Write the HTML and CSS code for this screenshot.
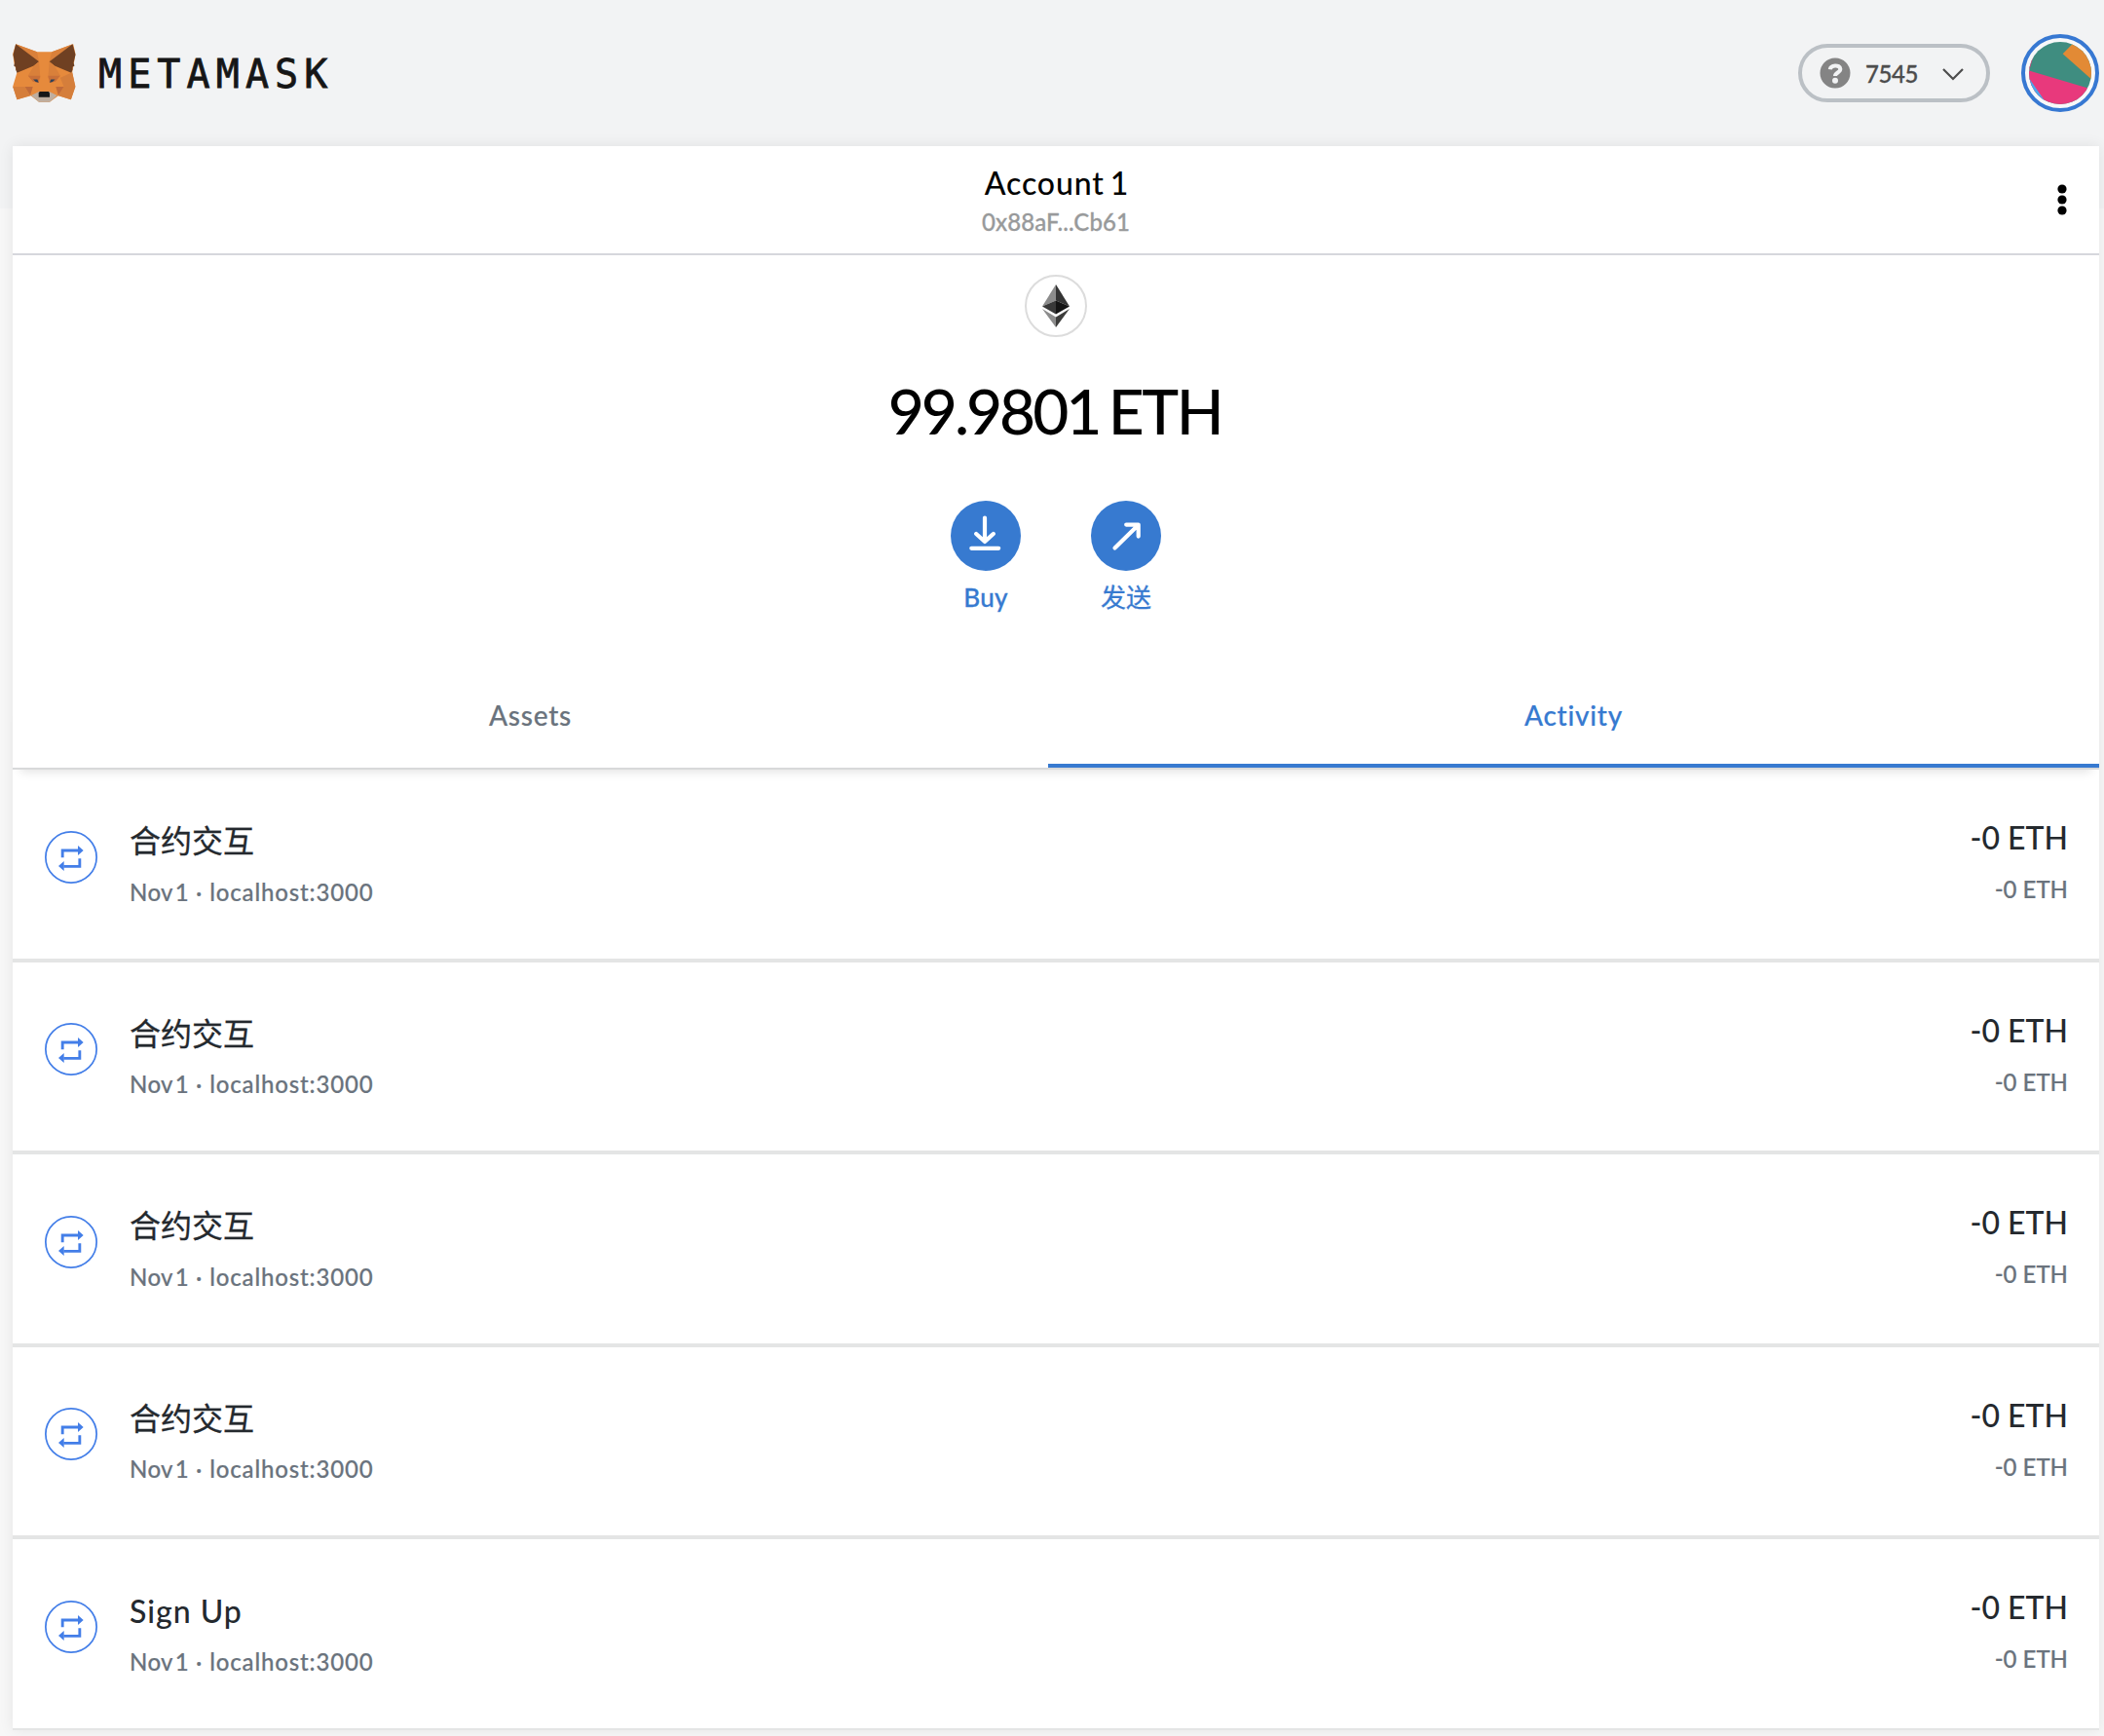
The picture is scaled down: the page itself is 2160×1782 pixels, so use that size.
FILE: index.html
```
<!DOCTYPE html>
<html lang="zh-CN">
<head>
<meta charset="utf-8">
<title>MetaMask</title>
<link rel="stylesheet" href="styles.css">
</head>
<body>
<svg class="defs" width="0" height="0">
  <symbol id="swap" viewBox="138 489 162 162">
    <circle cx="219" cy="570" r="78.4" fill="none" stroke="#437ee8" stroke-width="5.200"/>
    <path d="M192.5 571V549H242M245.500 574V598H196" fill="none" stroke="#437ee8" stroke-width="8.600"/>
    <path d="M240 534l17 15-17 15zM197 582l-17 15 17 15z" fill="#437ee8"/>
  </symbol>
</svg>
<header class="topbar">
  <div class="brand">
    <svg class="fox" viewBox="39 44 195 181">
      <path d="M48 45l66 24h46l66-24 7 30-5 30-5 27 9 44-13 41-39-12-27 19h-33l-25-19-43 12-13-41 13-44-9-27-4-30z" fill="#e68a3c"/>
      <path d="M48 45l66 24 6 30zM224 45l-64 24-8 30z" fill="#d9803a"/>
      <path d="M48 45l72 54-16 13-52 22-4-10v-8l-6-4 3-9-5-25zM224 45l-72 54 16 13 52 22 4-10v-8l6-4-3-9 6-25z" fill="#6f4022"/>
      <path d="M120 99L104 112 86 143l38 7zM152 99l16 13 18 31-38 7z" fill="#d9803a"/>
      <path d="M39 177h36l18 27-41 13zM233 177h-36l-18 27 40 13z" fill="#d57e3b"/>
      <path d="M223 132l10 45h-36l-11-28z" fill="#d57e3b"/>
      <path d="M76 177h25l-8 26zM197 177h-25l8 26z" fill="#c06a39"/>
      <path d="M86 143h38l-5 22-18-4zM186 143h-38l5 22 18-4z" fill="#c97038"/>
      <path d="M102 154h13l4 10-9-2zM170 154h-13l-4 10 9-2z" fill="#2f4156"/>
      <path d="M96 204l24-12h32l24 12-23 20h-33z" fill="#bfae9f"/>
      <path d="M122 192h28l3 4v13h-34v-13z" fill="#171717"/>
    </svg>
    <span class="wordmark">METAMASK</span>
  </div>
  <div class="tools">
    <div class="network">
      <svg class="help" viewBox="0 0 32 32"><circle cx="16" cy="16" r="15.500" fill="#848484"/><path d="M10.800 12.300C11.300 7.600 20.800 6.800 21.300 11.800c.3 3.600-5.300 3.700-5.300 7.200" fill="none" stroke="#f2f3f4" stroke-width="4"/><circle cx="16" cy="23.800" r="3" fill="#f2f3f4"/></svg>
      <span class="network-name">7545</span>
      <svg class="chevron" viewBox="0 0 22 13"><path d="M1 1l10 10L21 1" fill="none" stroke="#4d4d4d" stroke-width="2.200"/></svg>
    </div>
    <svg class="avatar" viewBox="765 45 240 240">
      <clipPath id="disc"><circle cx="885" cy="165" r="96"/></clipPath>
      <circle cx="885" cy="165" r="114" fill="#f7f8f9" stroke="#3778d2" stroke-width="12"/>
      <g clip-path="url(#disc)">
        <path d="M780 60h210v210H780z" fill="#3f8d80"/>
        <path d="M780 155l210 62.500V270H780zM780 160l10-4 16-56-26 10z" fill="#e8397c"/>
        <path d="M930 68l-37 38 95 84V68z" fill="#e28a35"/>
        <path d="M780 168l60 86h-60z" fill="#4aa8ee"/>
      </g>
    </svg>
  </div>
</header>
<main class="wallet">
  <section class="account">
    <div class="account-name">Account 1</div>
    <div class="account-address">0x88aF...Cb61</div>
    <svg class="menu" viewBox="0 0 10 32"><circle cx="5" cy="5" r="4.600"/><circle cx="5" cy="16" r="4.600"/><circle cx="5" cy="27" r="4.600"/></svg>
  </section>
  <section class="overview">
    <div class="token">
      <svg class="diamond" viewBox="0 0 28 44"><path d="M14 0v16.500L0 22.500z" fill="#8c8c8c"/><path d="M14 0v16.500l14 6z" fill="#343434"/><path d="M0 22.500l14-6V30.500z" fill="#393939"/><path d="M28 22.500l-14-6V30.500z" fill="#141414"/><path d="M0 25l14 8.500V44z" fill="#8c8c8c"/><path d="M28 25l-14 8.500V44z" fill="#3c3c3b"/></svg>
    </div>
    <div class="balance">99.9801 <span class="unit">ETH</span></div>
    <div class="actions">
      <div class="action">
        <svg class="action-icon" viewBox="0 0 72 72"><circle cx="36" cy="36" r="36" fill="#377ad0"/><path d="M35 17.500V40M26.200 34l8.800 8 8.800-8M21.300 48.800h27.900" fill="none" stroke="#fff" stroke-width="4.200" stroke-linecap="round" stroke-linejoin="round"/></svg>
        <span class="action-label buy">Buy</span>
      </div>
      <div class="action">
        <svg class="action-icon" viewBox="0 0 72 72"><circle cx="36" cy="36" r="36" fill="#377ad0"/><path d="M24.500 48.500l24-23.500M36.200 24.600h12.500v12" fill="none" stroke="#fff" stroke-width="4.200" stroke-linecap="round" stroke-linejoin="round"/></svg>
        <span class="action-label">发送</span>
      </div>
    </div>
  </section>
  <nav class="tabs">
    <div class="tab">Assets</div>
    <div class="tab active">Activity</div>
  </nav>
  <section class="list">
    <article class="row">
      <svg class="row-icon"><use href="#swap"/></svg>
      <div class="info"><div class="title">合约交互</div><div class="meta"><span class="date">Nov 1</span> · localhost:3000</div></div>
      <div class="amount"><div class="primary">-0 ETH</div><div class="secondary">-0 ETH</div></div>
    </article>
    <article class="row">
      <svg class="row-icon"><use href="#swap"/></svg>
      <div class="info"><div class="title">合约交互</div><div class="meta"><span class="date">Nov 1</span> · localhost:3000</div></div>
      <div class="amount"><div class="primary">-0 ETH</div><div class="secondary">-0 ETH</div></div>
    </article>
    <article class="row">
      <svg class="row-icon"><use href="#swap"/></svg>
      <div class="info"><div class="title">合约交互</div><div class="meta"><span class="date">Nov 1</span> · localhost:3000</div></div>
      <div class="amount"><div class="primary">-0 ETH</div><div class="secondary">-0 ETH</div></div>
    </article>
    <article class="row">
      <svg class="row-icon"><use href="#swap"/></svg>
      <div class="info"><div class="title">合约交互</div><div class="meta"><span class="date">Nov 1</span> · localhost:3000</div></div>
      <div class="amount"><div class="primary">-0 ETH</div><div class="secondary">-0 ETH</div></div>
    </article>
    <article class="row">
      <svg class="row-icon"><use href="#swap"/></svg>
      <div class="info"><div class="title latin">Sign Up</div><div class="meta"><span class="date">Nov 1</span> · localhost:3000</div></div>
      <div class="amount"><div class="primary">-0 ETH</div><div class="secondary">-0 ETH</div></div>
    </article>
  </section>
</main>
</body>
</html>
```
FILE: styles.css
```
* { box-sizing: border-box; }
body {
  margin: 0;
  height: 1782px;
  overflow: hidden;
  padding: 0 5px 0 13px;
  background: linear-gradient(#f2f3f4 214px, #f7f7f7 214px);
  font-family: Lato, "Noto Sans CJK SC", sans-serif;
  font-weight: 500;
  color: #24292e;
  white-space: nowrap;
}
svg { display: block; flex: none; }
.defs { position: absolute; }

.topbar { height: 150px; display: flex; justify-content: space-between; align-items: center; }
.brand { display: flex; align-items: center; gap: 23px; }
.fox { width: 65px; height: 60px; }
.wordmark {
  padding-top: 2px;
  font: 40px/60px "DejaVu Sans Mono", monospace;
  letter-spacing: 6.1px;
  color: #161616;
  -webkit-text-stroke: .8px #161616;
}
.tools { display: flex; align-items: center; gap: 32px; }
.network {
  width: 197px;
  height: 60px;
  border: 4px solid #bbc0c5;
  border-radius: 30px;
  display: flex;
  align-items: center;
  padding-left: 18px;
}
.help { width: 32px; height: 32px; }
.network-name { width: 79px; margin-left: 15px; font-size: 24px; letter-spacing: -.4px; color: #4d4d4d; -webkit-text-stroke: .3px; }
.chevron { width: 22px; height: 13px; margin-top: 2px; }
.avatar { width: 80px; height: 80px; }

.wallet { height: 1626px; background: #fff; box-shadow: 0 0 14px rgba(0, 0, 0, .08); display: flex; flex-direction: column; }
.account {
  position: relative;
  height: 112px;
  padding-top: 18px;
  border-bottom: 2px solid #d6d7dc;
  text-align: center;
}
.account-name { padding-left: 2px; font-size: 32px; line-height: 40px; letter-spacing: .9px; word-spacing: -3px; color: #000; }
.account-address { margin-top: 5px; font-size: 24px; line-height: 30px; letter-spacing: .1px; color: #989a9b; -webkit-text-stroke: .3px; }
.menu { position: absolute; right: 33px; top: 39px; width: 10px; height: 32px; }

.overview { height: 453px; padding-top: 20px; display: flex; flex-direction: column; align-items: center; }
.token { width: 64px; height: 64px; border: 2px solid #dcdcdc; border-radius: 50%; display: grid; place-items: center; }
.diamond { width: 28px; height: 44px; }
.balance { margin-top: 36px; font-size: 64px; line-height: 80px; color: #000; letter-spacing: -3px; word-spacing: -4px; padding-right: 2px; }
.unit { letter-spacing: -2.4px; }
.actions { display: flex; gap: 72px; margin-top: 52px; }
.action { width: 72px; display: flex; flex-direction: column; align-items: center; gap: 11px; }
.action-icon { width: 72px; height: 72px; }
.action-label { font-size: 26px; line-height: 32px; font-weight: 400; color: #377ad0; -webkit-text-stroke: .3px; }
.buy { font-weight: 500; letter-spacing: .3px; }

.tabs { position: relative; z-index: 1; height: 75px; display: flex; border-bottom: 2px solid #d8d9da; box-shadow: 0 10px 10px -8px rgba(0, 0, 0, .12); }
.tab { width: 1063px; text-align: center; font-size: 28px; line-height: 38px; letter-spacing: .75px; color: #6a737d; -webkit-text-stroke: .2px; }
.tab.active { width: 1079px; color: #377ad0; border-bottom: 4px solid #377ad0; }

.list { margin-top: -2px; }
.row { height: 197.6px; padding: 0 32px 0 33px; display: flex; border-top: 2px solid #e4e5e5; border-bottom: 2px solid #e4e5e5; }
.row-icon { width: 54px; height: 54px; margin-top: 62.5px; }
.info { flex: 1; margin-left: 33px; padding-top: 53px; }
.title { font-size: 32px; line-height: 40px; font-weight: 400; -webkit-text-stroke: .3px; }
.title.latin { padding-top: 1px; margin-bottom: -1px; font-weight: 500; letter-spacing: 1px; -webkit-text-stroke: 0; }
.meta { margin-top: 17.5px; font-size: 24px; line-height: 30px; letter-spacing: .85px; color: #6a737d; -webkit-text-stroke: .2px; }
.date { letter-spacing: .4px; word-spacing: -4px; }
.amount { padding-top: 50px; text-align: right; }
.primary { font-size: 32px; line-height: 40px; }
.secondary { margin-top: 18px; font-size: 24px; line-height: 30px; color: #6a737d; -webkit-text-stroke: .2px; }
```
